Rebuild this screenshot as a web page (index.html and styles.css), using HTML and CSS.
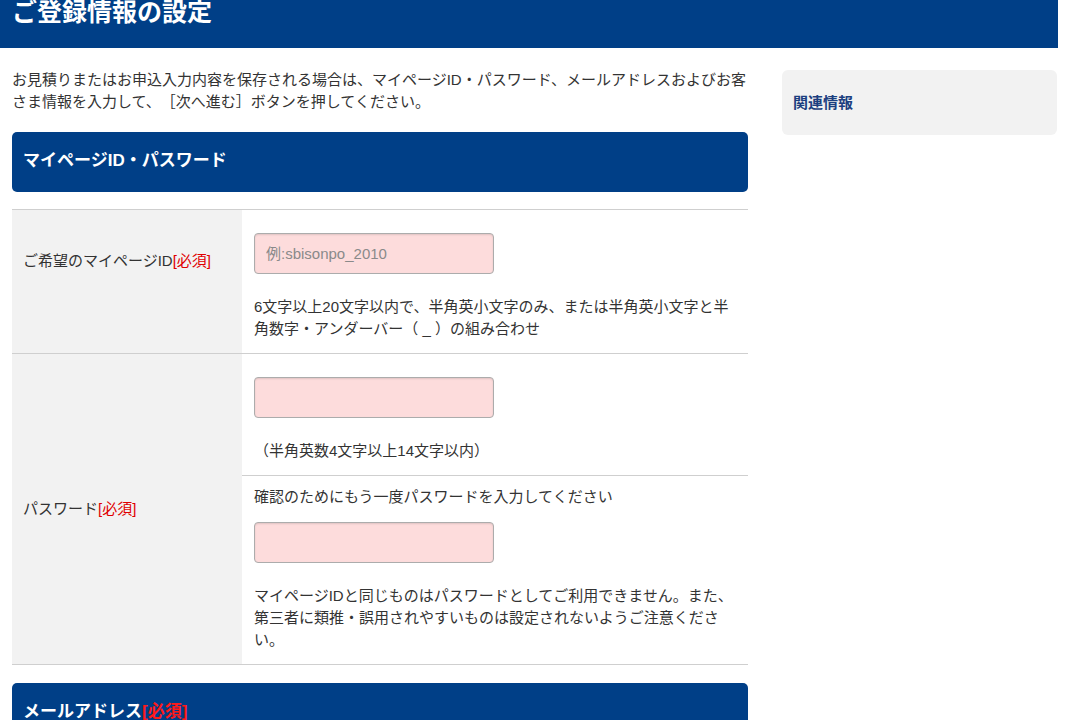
FILE: index.html
```html
<!DOCTYPE html>
<html lang="ja">
<head>
<meta charset="utf-8">
<title>ご登録情報の設定</title>
<link rel="stylesheet" href="styles.css">
</head>
<body>
<div class="page">
  <header class="page-header">
    <h1 class="page-title">ご登録情報の設定</h1>
  </header>
  <div class="layout">
    <main class="main">
      <p class="intro">お見積りまたはお申込入力内容を保存される場合は、マイページID・パスワード、メールアドレスおよびお客さま情報を入力して、［次へ進む］ボタンを押してください。</p>

      <h2 class="section-head">マイページID・パスワード</h2>
      <div class="form-table">
        <div class="row">
          <div class="label label-top">ご希望のマイページID<span class="req">[必須]</span></div>
          <div class="field">
            <div class="sub">
              <input class="text-input" type="text" placeholder="例:sbisonpo_2010">
              <p class="note">6文字以上20文字以内で、半角英小文字のみ、または半角英小文字と半角数字・アンダーバー（ _ ）の組み合わせ</p>
            </div>
          </div>
        </div>
        <div class="row">
          <div class="label label-mid">パスワード<span class="req">[必須]</span></div>
          <div class="field">
            <div class="sub">
              <input class="text-input" type="password">
              <p class="note">（半角英数4文字以上14文字以内）</p>
            </div>
            <div class="sub sub-confirm">
              <p class="lead">確認のためにもう一度パスワードを入力してください</p>
              <input class="text-input" type="password">
              <p class="note">マイページIDと同じものはパスワードとしてご利用できません。また、第三者に類推・誤用されやすいものは設定されないようご注意ください。</p>
            </div>
          </div>
        </div>
      </div>

      <h2 class="section-head">メールアドレス<span class="req">[必須]</span></h2>
    </main>
    <aside class="side">
      <div class="side-box">
        <h3 class="side-title">関連情報</h3>
      </div>
    </aside>
  </div>
</div>
</body>
</html>
```

FILE: styles.css
```css
* { box-sizing: border-box; }
html, body { margin: 0; padding: 0; background: #fff; }
body {
  font-family: "Liberation Sans", "Noto Sans CJK JP", sans-serif;
  font-size: 15px;
  line-height: 22px;
  color: #333;
  overflow: hidden;
  text-spacing-trim: space-all;
}
.page { width: 1058px; }
.page-header {
  background: #003f87;
  height: 48px;
  padding: 0 12px;
}
.page-title {
  margin: 0;
  color: #fff;
  font-size: 25px;
  line-height: 25px;
  font-weight: bold;
}
.layout {
  display: flex;
  gap: 34px;
  padding: 0 1px 0 12px;
}
.main { width: 736px; flex: none; }
.side { flex: 1; padding-top: 22px; }
.intro { margin: 21px 0 19px; }
.section-head {
  margin: 0;
  background: #003f87;
  color: #fff;
  font-size: 17px;
  font-weight: bold;
  height: 60px;
  line-height: 58px;
  padding: 0 11px;
  border-radius: 5px;
}
.section-head .req { color: #ff1a1a; }
.form-table {
  margin: 17px 0 18px;
  border-top: 1px solid #cfcfcf;
}
.row {
  display: flex;
  border-bottom: 1px solid #cfcfcf;
}
.label {
  width: 230px;
  flex: none;
  background: #f2f2f2;
  padding: 0 11px;
}
.label-top { padding-top: 40px; }
.label-mid { display: flex; align-items: center; }
.req { color: #e00000; }
.field { flex: 1; }
.sub { padding: 23px 12px 13px; }
.sub + .sub { border-top: 1px solid #cfcfcf; }
.sub-confirm { padding-top: 10px; padding-bottom: 13px; }
.lead { margin: 0 0 14px; }
.text-input {
  display: block;
  width: 240px;
  height: 41px;
  margin: 0;
  background: #fddcdc;
  border: 1px solid #acacac;
  border-radius: 4px;
  box-shadow: inset 0 1px 2px rgba(0,0,0,0.12);
  padding: 0 11px;
  font-family: "Liberation Sans", "Noto Sans CJK JP", sans-serif;
  font-size: 15px;
  color: #333;
}
.text-input::placeholder { color: #8a8a8a; }
.note { margin: 22px 0 0; }
.side-box {
  background: #f2f2f2;
  border-radius: 6px;
  height: 65px;
  padding: 0 11px;
  display: flex;
  align-items: center;
}
.side-title {
  margin: 0;
  font-size: 15px;
  font-weight: bold;
  color: #1c3f80;
}
```
